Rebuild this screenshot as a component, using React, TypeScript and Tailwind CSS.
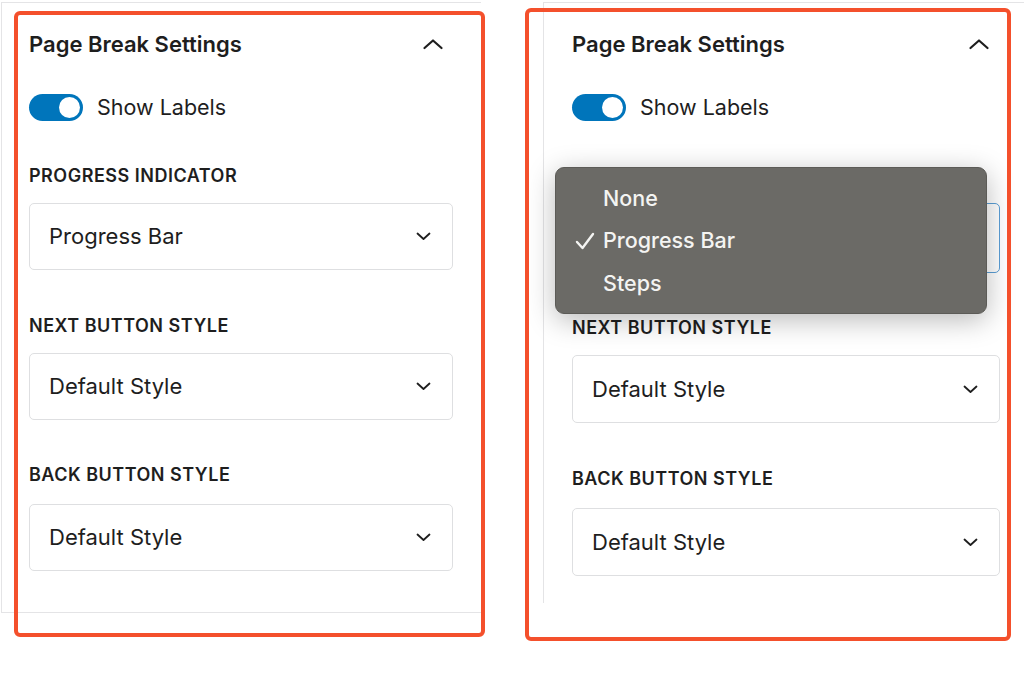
import React from "react";

const font = { fontFamily: "Inter, 'Noto Sans', sans-serif" };

function ChevronUp() {
  return (
    <svg width="20" height="12" viewBox="0 0 20 12" fill="none">
      <polyline points="1.5,10 10,2.5 18.5,10" stroke="#1e1e1e" strokeWidth="2.2" strokeLinecap="round" strokeLinejoin="round" />
    </svg>
  );
}

function ChevronDown() {
  return (
    <svg width="15" height="9" viewBox="0 0 15 9" fill="none">
      <polyline points="1.5,1.5 7.5,7 13.5,1.5" stroke="#1e1e1e" strokeWidth="1.8" strokeLinecap="round" strokeLinejoin="round" />
    </svg>
  );
}

function Toggle() {
  return (
    <div className="flex h-[27px] w-[54px] items-center justify-end rounded-full bg-[#0075bb] pr-[3px]">
      <div className="h-[21px] w-[21px] rounded-full bg-white" />
    </div>
  );
}

function Label({ children }: { children: React.ReactNode }) {
  return (
    <div className="h-[24px] text-[18px] leading-[24px] font-semibold uppercase tracking-[0.5px] text-[#1e1e1e]">
      {children}
    </div>
  );
}

function SelectBox({ value, h, focused }: { value: string; h: string; focused?: boolean }) {
  return (
    <div
      className={
        "flex items-center justify-between rounded-[5px] bg-white pl-[19px] pr-[21px] " +
        h +
        (focused ? " border-[1.5px] border-[#5b9fd6]" : " border border-[#dedfe1]")
      }
    >
      <span className="text-[22px] text-[#1e1e1e]">{value}</span>
      <ChevronDown />
    </div>
  );
}

function PanelBody({ right }: { right?: boolean }) {
  return (
    <>
      <div className="flex h-[28px] items-center justify-between">
        <span className="text-[22px] font-semibold text-[#1e1e1e]">Page Break Settings</span>
        <span className={right ? "mr-[11px]" : "mr-[10px]"}>
          <ChevronUp />
        </span>
      </div>
      <div className="mt-[33px] flex items-center gap-[14px]">
        <Toggle />
        <span className="text-[21.5px] text-[#1e1e1e]">Show Labels</span>
      </div>
      <div className="mt-[41px]">
        <Label>Progress Indicator</Label>
      </div>
      <div className="mt-[15px]">
        <SelectBox value="Progress Bar" h={right ? "h-[70px]" : "h-[67px]"} focused={right} />
      </div>
      <div className={right ? "mt-[43px]" : "mt-[44px]"}>
        <Label>Next Button Style</Label>
      </div>
      <div className="mt-[15px]">
        <SelectBox value="Default Style" h={right ? "h-[68px]" : "h-[67px]"} />
      </div>
      <div className={right ? "mt-[44px]" : "mt-[43px]"}>
        <Label>Back Button Style</Label>
      </div>
      <div className="mt-[17px]">
        <SelectBox value="Default Style" h={right ? "h-[68px]" : "h-[67px]"} />
      </div>
    </>
  );
}

function Check() {
  return (
    <svg width="20" height="18" viewBox="0 0 20 18" fill="none">
      <polyline points="2,10 7.5,16 18,2" stroke="#f4f4f2" strokeWidth="2.4" strokeLinecap="round" strokeLinejoin="round" />
    </svg>
  );
}

function OptionsMenu() {
  const items = ["None", "Progress Bar", "Steps"];
  return (
    <div className="absolute left-[11px] top-[164px] flex h-[147px] w-[432px] flex-col justify-center rounded-[9px] border border-[#5c5b57] bg-[#6b6a66] shadow-[0_6px_28px_rgba(0,0,0,0.28)]">
      {items.map((item) => (
        <div key={item} className="relative flex h-[42.5px] items-center pl-[47px]">
          {item === "Progress Bar" && (
            <span className="absolute left-[19px] top-[13px]">
              <Check />
            </span>
          )}
          <span className="text-[21.5px] font-medium text-[#f4f4f2]">{item}</span>
        </div>
      ))}
    </div>
  );
}

export default function App() {
  return (
    <div className="relative flex h-[677px] w-[1024px] overflow-hidden bg-white" style={font}>
      {/* left screenshot */}
      <div className="ml-[1px] mt-[2px] h-[611px] w-[480px] border-y border-l border-[#e4e4e6] pl-[27px] pr-[28px] pt-[27px]">
        <PanelBody />
      </div>

      {/* right screenshot */}
      <div className="relative ml-[62px] mt-[2px] flex h-[601px] w-[481px] flex-col border-l border-t border-[#e4e4e6] pl-[28px] pr-[24px] pt-[27px]">
        <PanelBody right />
        <OptionsMenu />
      </div>

      {/* annotation outlines */}
      <div className="pointer-events-none absolute left-[14px] top-[11px] h-[626px] w-[471px] rounded-[6px] border-[4px] border-[#f4502c]" />
      <div className="pointer-events-none absolute left-[525px] top-[8px] h-[633px] w-[486px] rounded-[6px] border-[4px] border-[#f4502c]" />
    </div>
  );
}
